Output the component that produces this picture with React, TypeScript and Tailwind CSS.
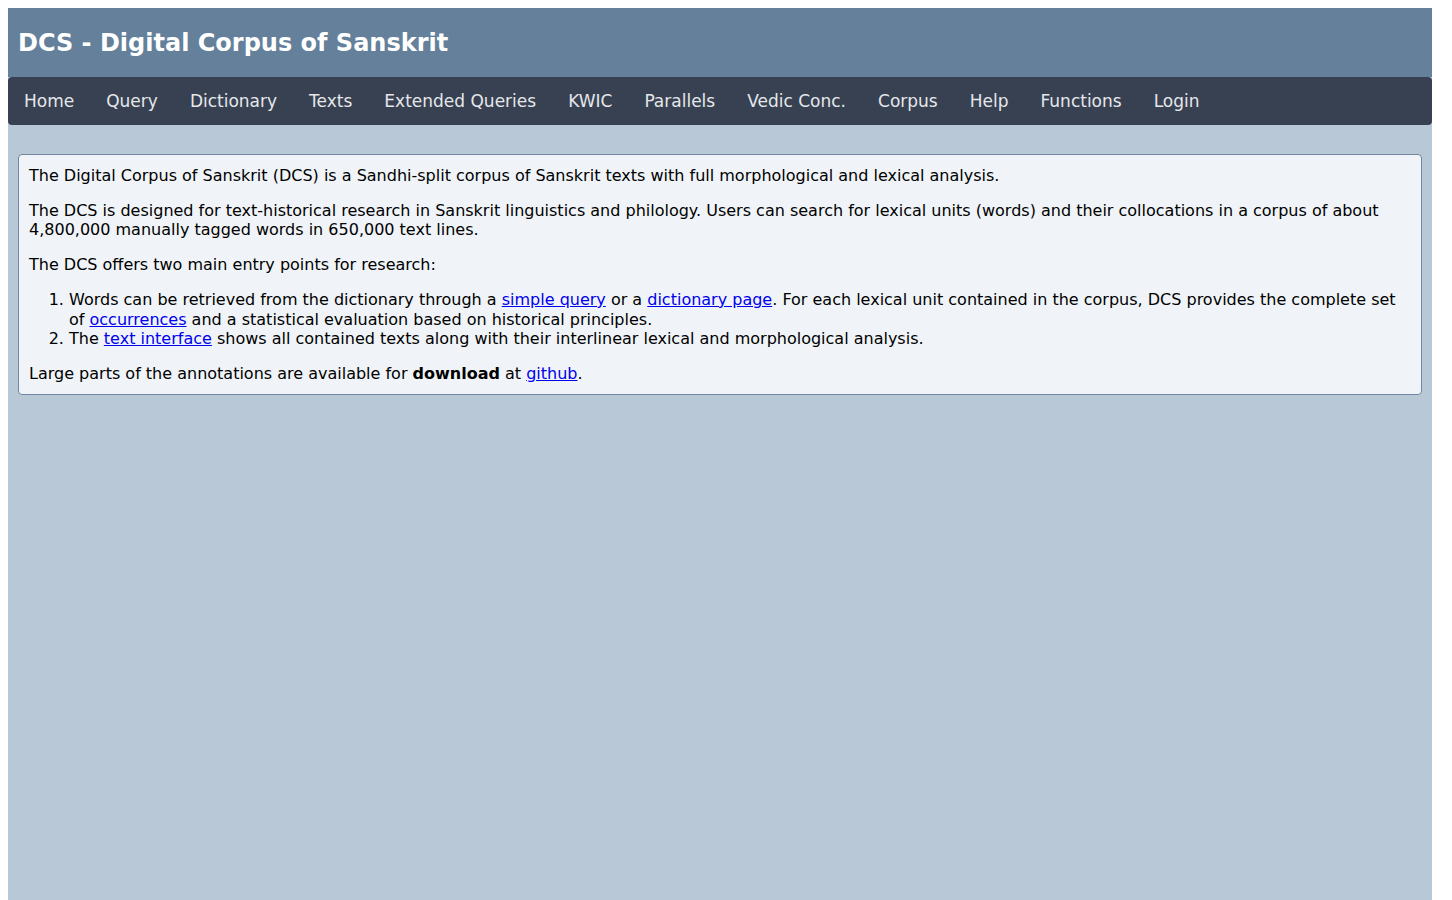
const navItems = [
  'Home',
  'Query',
  'Dictionary',
  'Texts',
  'Extended Queries',
  'KWIC',
  'Parallels',
  'Vedic Conc.',
  'Corpus',
  'Help',
  'Functions',
  'Login',
]

export default function App() {
  return (
    <div className="bg-white p-2 font-['DejaVu_Sans',sans-serif] text-black">
      <div className="min-h-[892px] w-[1424px] bg-[#b8c8d7]">
        {/* Header */}
        <div className="bg-[#64809a] px-[10px] pt-[17px] pb-[16px]">
          <h1 className="text-[24px] font-bold leading-[36px] text-white">DCS - Digital Corpus of Sanskrit</h1>
        </div>

        {/* Navigation */}
        <nav className="flex rounded bg-[#374151]">
          {navItems.map((item) => (
            <a key={item} href="#" className="px-4 py-3 text-[17px] leading-[24px] text-[#e5e7eb]">
              {item}
            </a>
          ))}
        </nav>

        {/* Main content */}
        <div className="px-[10px] pt-[29px]">
          <div className="rounded border border-[#6f87a0] bg-[#f0f4f8] px-[10px] pt-[11px] pb-[11px] text-[16px] leading-[19px]">
            <p>
              The Digital Corpus of Sanskrit (DCS) is a Sandhi-split corpus of Sanskrit texts with full morphological and
              lexical analysis.
            </p>
            <p className="mt-4">
              The DCS is designed for text-historical research in Sanskrit linguistics and philology. Users can search for
              lexical units (words) and their collocations in a corpus of about 4,800,000 manually tagged words in 650,000
              text lines.
            </p>
            <p className="mt-4">The DCS offers two main entry points for research:</p>
            <ol className="mt-4 list-decimal pl-10 leading-[19.5px]">
              <li>
                Words can be retrieved from the dictionary through a{' '}
                <a href="#" className="text-[#0000ee] underline">simple query</a> or a{' '}
                <a href="#" className="text-[#0000ee] underline">dictionary page</a>. For each lexical unit contained in the
                corpus, DCS provides the complete set of{' '}
                <a href="#" className="text-[#0000ee] underline">occurrences</a> and a statistical evaluation based on
                historical principles.
              </li>
              <li>
                The <a href="#" className="text-[#0000ee] underline">text interface</a> shows all contained texts along with
                their interlinear lexical and morphological analysis.
              </li>
            </ol>
            <p className="mt-[15px]">
              Large parts of the annotations are available for <b>download</b> at{' '}
              <a href="#" className="text-[#0000ee] underline">github</a>.
            </p>
          </div>
        </div>
      </div>
    </div>
  )
}
